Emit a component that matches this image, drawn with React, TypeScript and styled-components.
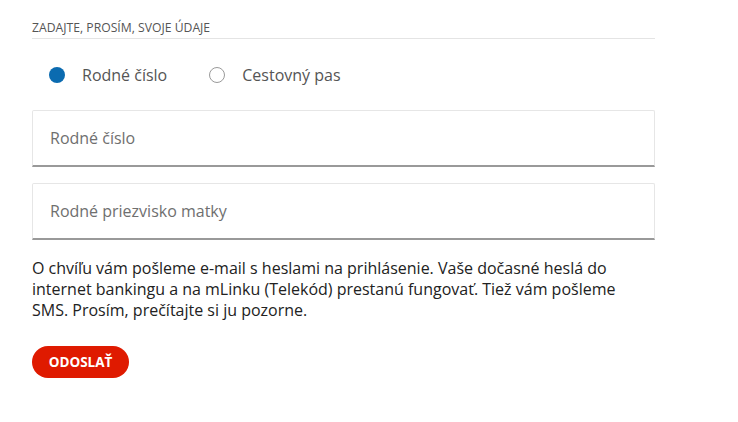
import React, { useState } from "react";
import styled, { createGlobalStyle } from "styled-components";

const Global = createGlobalStyle`
  html, body { margin: 0; padding: 0; background: #fff; }
  body { font-family: "Open Sans", "Noto Sans", sans-serif; }
  * { box-sizing: border-box; }
`;

const Page = styled.div`
  padding: 19px 0 0 32px;
  width: 655px;
`;

const Heading = styled.div`
  font-size: 12.2px;
  line-height: 17px;
  color: #555;
  text-transform: uppercase;
  padding-bottom: 2px;
  border-bottom: 1px solid #e4e4e4;
`;

const RadioRow = styled.div`
  display: flex;
  align-items: flex-start;
  gap: 42px;
  padding: 25px 0 0 17px;
  height: 71px;
`;

const RadioLabel = styled.label`
  display: flex;
  align-items: center;
  gap: 17px;
  font-size: 16px;
  line-height: 22px;
  color: #555;
  cursor: pointer;
`;

const Dot = styled.span<{ $on: boolean }>`
  width: 16px;
  height: 16px;
  border-radius: 50%;
  flex: none;
  background: ${(p) => (p.$on ? "#0b6bb0" : "#fff")};
  border: ${(p) => (p.$on ? "none" : "1px solid #9a9a9a")};
`;

const Fields = styled.div`
  display: flex;
  flex-direction: column;
  gap: 16px;
`;

const Field = styled.input`
  display: block;
  width: 623px;
  height: 57px;
  padding: 0 17px;
  font-family: "Open Sans", "Noto Sans", sans-serif;
  font-size: 16px;
  color: #333;
  background: #fff;
  border: 1px solid #e6e6e6;
  border-bottom: 2px solid #999;
  border-radius: 2px 2px 0 0;
  outline: none;
  &::placeholder { color: #6f6f6f; }
`;

const Note = styled.p`
  margin: 18px 0 0;
  width: 623px;
  font-size: 16px;
  line-height: 21px;
  color: #222;
`;

const Submit = styled.button`
  margin-top: 25px;
  width: 97px;
  height: 32px;
  border: none;
  border-radius: 16px;
  background: #df1a00;
  color: #fff;
  font-family: "Open Sans", "Noto Sans", sans-serif;
  font-weight: 700;
  font-size: 13.5px;
  cursor: pointer;
`;

export default function App() {
  const [sel, setSel] = useState<"rc" | "pas">("rc");
  return (
    <>
      <Global />
      <Page>
        <Heading>Zadajte, prosím, svoje údaje</Heading>
        <RadioRow>
          <RadioLabel onClick={() => setSel("rc")}>
            <Dot $on={sel === "rc"} />
            Rodné číslo
          </RadioLabel>
          <RadioLabel onClick={() => setSel("pas")}>
            <Dot $on={sel === "pas"} />
            Cestovný pas
          </RadioLabel>
        </RadioRow>
        <Fields>
          <Field placeholder="Rodné číslo" />
          <Field placeholder="Rodné priezvisko matky" />
        </Fields>
        <Note>
          O chvíľu vám pošleme e-mail s heslami na prihlásenie. Vaše dočasné heslá do internet bankingu a na mLinku (Telekód) prestanú fungovať. Tiež vám pošleme SMS. Prosím, prečítajte si ju pozorne.
        </Note>
        <Submit>ODOSLAŤ</Submit>
      </Page>
    </>
  );
}
